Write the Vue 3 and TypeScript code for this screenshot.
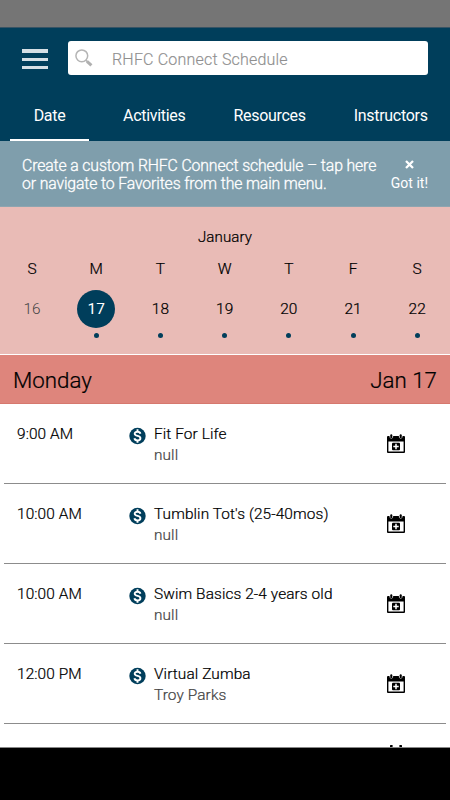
<script setup lang="ts">
interface Day { letter: string; num: number; past?: boolean; active?: boolean }
interface ClassItem { time: string; title: string; sub: string }

const tabs: string[] = ['Date', 'Activities', 'Resources', 'Instructors']

const days: Day[] = [
  { letter: 'S', num: 16, past: true },
  { letter: 'M', num: 17, active: true },
  { letter: 'T', num: 18 },
  { letter: 'W', num: 19 },
  { letter: 'T', num: 20 },
  { letter: 'F', num: 21 },
  { letter: 'S', num: 22 },
]

const items: ClassItem[] = [
  { time: '9:00 AM', title: 'Fit For Life', sub: 'null' },
  { time: '10:00 AM', title: "Tumblin Tot's (25-40mos)", sub: 'null' },
  { time: '10:00 AM', title: 'Swim Basics 2-4 years old', sub: 'null' },
  { time: '12:00 PM', title: 'Virtual Zumba', sub: 'Troy Parks' },
]
</script>

<template>
  <div class="screen">
    <div class="status"></div>
    <header class="header">
      <div class="top">
        <div class="menu"><i></i><i></i><i></i></div>
        <div class="search">
          <svg class="glass" width="18" height="18" viewBox="0 0 18 18">
            <circle cx="6.8" cy="6.8" r="5.9" fill="none" stroke="#b5b5b5" stroke-width="1.5" />
            <path d="M10.9 11.2L12.6 12.8" stroke="#b5b5b5" stroke-width="1.6" />
            <path d="M12 12.3L16.4 16.4" stroke="#b0b0b0" stroke-width="3" />
          </svg>
          <span class="placeholder">RHFC Connect Schedule</span>
        </div>
      </div>
      <nav class="tabs">
        <span v-for="(t, i) in tabs" :key="t" class="tab" :class="{ on: i === 0 }">{{ t }}</span>
      </nav>
    </header>

    <section class="banner">
      <p>Create a custom RHFC Connect schedule – tap here<br />or navigate to Favorites from the main menu.</p>
      <div class="got">
        <svg width="9" height="9" viewBox="0 0 9 9"><path d="M1 1L8 8M8 1L1 8" stroke="#fff" stroke-width="2.3" /></svg>
        <span>Got it!</span>
      </div>
    </section>

    <section class="calendar">
      <div class="month">January</div>
      <div class="week">
        <div v-for="d in days" :key="d.num" class="day">
          <span class="letter">{{ d.letter }}</span>
          <span class="num" :class="{ past: d.past, active: d.active }">{{ d.num }}</span>
          <span v-if="!d.past" class="dot"></span>
        </div>
      </div>
    </section>

    <div class="dayhead"><span>Monday</span><span>Jan 17</span></div>

    <main class="list">
      <article v-for="(it, i) in items" :key="i" class="row">
        <span class="time">{{ it.time }}</span>
        <svg class="dollar" width="17" height="18" viewBox="0 0 17 18">
          <circle cx="8.5" cy="9" r="8.2" fill="#003e5b" />
          <path d="M11.4 6.7C11.1 5.3 10 4.7 8.5 4.7C6.9 4.7 5.7 5.5 5.7 6.8C5.7 9.7 11.4 8.2 11.4 11.2C11.4 12.6 10.2 13.4 8.5 13.4C6.9 13.4 5.7 12.6 5.4 11.2M8.5 2.3V5M8.5 13.1V15.8" fill="none" stroke="#fff" stroke-width="1.9" />
        </svg>
        <div class="info">
          <span class="title">{{ it.title }}</span>
          <span class="sub">{{ it.sub }}</span>
        </div>
        <svg class="add" width="18" height="19" viewBox="0 0 18 19">
          <path d="M0 3Q0 2 1 2H2.5V3.3Q4.3 6.2 6.1 3.3V2H11.9V3.3Q13.7 6.2 15.5 3.3V2H17Q18 2 18 3V18Q18 19 17 19H1Q0 19 0 18ZM1.4 7.4V17.6H16.6V7.4Z" fill="#000" fill-rule="evenodd" />
          <rect x="3.3" y="0.3" width="2" height="4" rx=".9" />
          <rect x="12.7" y="0.3" width="2" height="4" rx=".9" />
          <rect x="5" y="8.8" width="8" height="7.4" rx="1" />
          <path d="M9 9.800V15.200M6.300 12.500H11.700" stroke="#fff" stroke-width="1.500" />
        </svg>
      </article>
      <article class="row partial">
        <svg class="add" width="18" height="19" viewBox="0 0 18 19">
          <rect x="3" y="0" width="2.6" height="4" rx=".5" />
          <rect x="12.4" y="0" width="2.6" height="4" rx=".5" />
        </svg>
      </article>
    </main>
    <footer class="navbar"></footer>
  </div>
</template>

<style>
body { margin: 0; background: #000; }
</style>

<style scoped>
.screen {
  width: 450px;
  height: 800px;
  display: flex;
  flex-direction: column;
  overflow: hidden;
  background: #fff;
  font-family: Roboto, "Liberation Sans", sans-serif;
  font-size: 15.4px;
  letter-spacing: .1px;
  font-weight: 300;
  -webkit-text-stroke-width: .22px;
  color: #000;
}
.screen > * { flex-shrink: 0; box-sizing: border-box; }
.status { height: 28px; background: #757575; border-bottom: 1px solid #375364; }
.header { height: 113px; background: #003e5b; display: flex; flex-direction: column; justify-content: space-between; }
.top { display: flex; padding: 13px 22px 0; justify-content: space-between; }
.menu { display: flex; flex-direction: column; gap: 4px; padding-top: 8px; width: 26px; }
.menu i { height: 4px; background: #d5dfe5; }
.menu i + i { height: 3px; margin-top: 1px; }
.search { width: 360px; height: 34px; box-sizing: border-box; background: #fff; border-radius: 3px; display: flex; align-items: center; padding-left: 7px; }
.glass { margin-top: -1px; }
.placeholder { margin-left: 19px; color: #8f8f8f; font-size: 16px; letter-spacing: .2px; padding-top: 2px; -webkit-text-stroke-width: .15px; }
.tabs { display: flex; gap: 48px; padding-left: 10px; color: #fff; font-size: 16px; letter-spacing: -.3px; font-weight: 400; -webkit-text-stroke-width: 0; white-space: nowrap; }
.tab { height: 39px; box-sizing: border-box; line-height: 28px; border-bottom: 2px solid transparent; }
.tab.on { width: 79px; margin-right: -14px; text-align: center; border-color: #fff; }
.banner { height: 66px; background: #7f9eac; border-bottom: 1px solid #8ea5b0; color: #fff; display: flex; justify-content: space-between; padding: 16px 22px 0 22px; font-weight: 400; letter-spacing: 0; -webkit-text-stroke-width: 0; }
.banner p { margin: 0; line-height: 18px; white-space: nowrap; font-size: 15.8px; font-weight: 300; letter-spacing: -.13px; -webkit-text-stroke-width: .3px; }
.got { display: flex; flex-direction: column; align-items: center; font-size: 14px; padding-top: 3px; white-space: nowrap; }
.got span { line-height: 18px; margin-top: 5px; }
.calendar { height: 148px; background: #e9bbb6; border-bottom: 1px solid #fff; }
.month { text-align: center; padding-top: 20px; line-height: 20px; font-size: 15.1px; }
.week { display: grid; grid-template-columns: repeat(7, 64.2px); }
.day { display: flex; flex-direction: column; align-items: center; }
.letter { line-height: 20px; margin-top: 12px; }
.num { width: 38px; height: 38px; line-height: 39px; margin-top: 11px; border-radius: 50%; text-align: center; }
.past { color: #444; -webkit-text-stroke-width: 0; }
.active { background: #003e5b; color: #fff; font-weight: 400; -webkit-text-stroke-width: 0; }
.dot { width: 5px; height: 5px; border-radius: 50%; background: #003e5b; margin-top: 5px; }
.dayhead { height: 49px; background: #de857c; border-bottom: 1px solid #d6786e; display: flex; justify-content: space-between; padding: 0 13px; line-height: 50px; font-size: 22.3px; letter-spacing: 0; }
.list { height: 344px; overflow: hidden; border-bottom: 1px solid #888; }
.row { height: 80px; margin: 0 4px; box-sizing: border-box; border-bottom: 1px solid #8c8c8c; display: flex; align-items: flex-start; padding: 20px 41px 0 13px; }
.time { width: 112px; line-height: 20px; }
.dollar { margin-top: 3px; }
.info { display: flex; flex-direction: column; margin-left: 8px; white-space: nowrap; }
.title { line-height: 20px; }
.sub { color: #444; line-height: 22px; }
.add { margin: 10px 0 0 auto; }
.partial .add { margin-top: 1px; }
.navbar { flex: 1; background: #000; }
</style>
